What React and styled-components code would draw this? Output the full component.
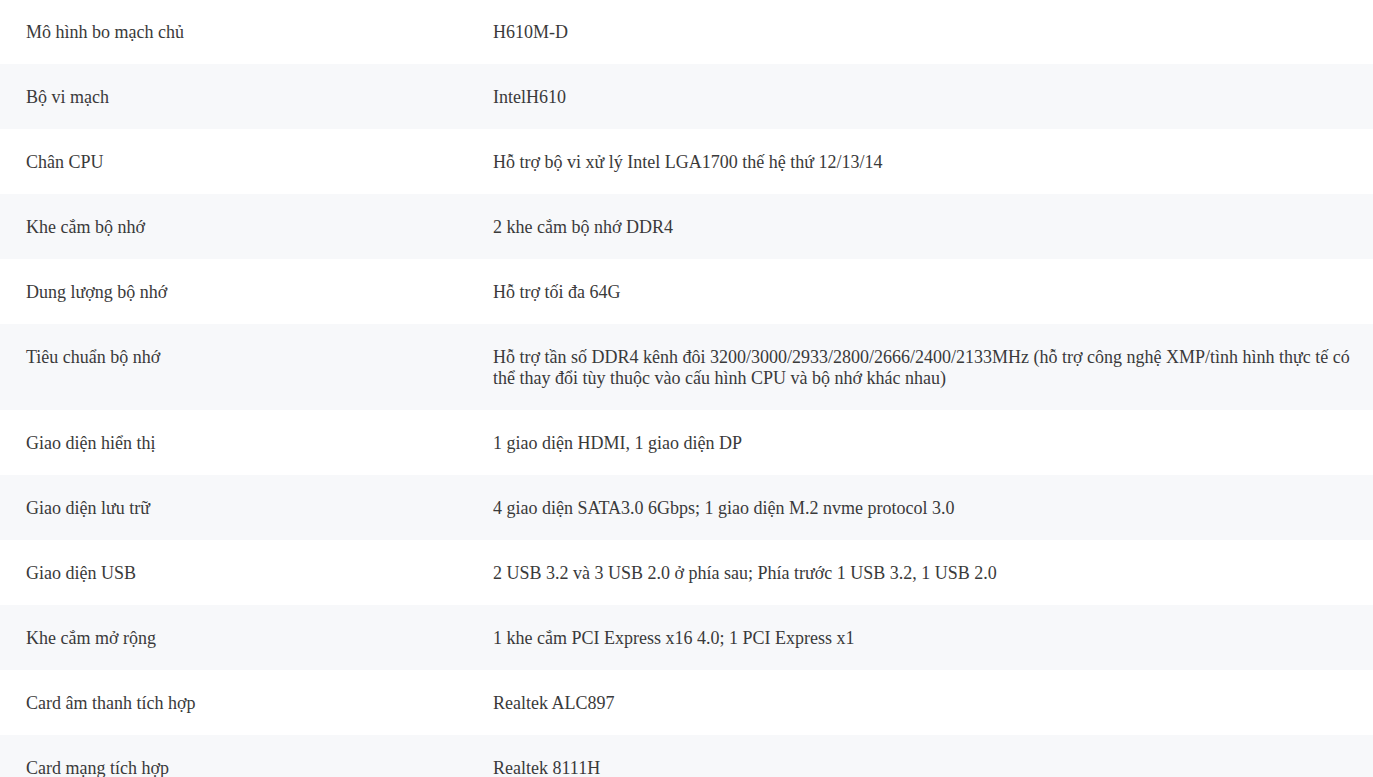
import styled, { createGlobalStyle } from "styled-components";

const specs = [
  ["Mô hình bo mạch chủ", "H610M-D"],
  ["Bộ vi mạch", "IntelH610"],
  ["Chân CPU", "Hỗ trợ bộ vi xử lý Intel LGA1700 thế hệ thứ 12/13/14"],
  ["Khe cắm bộ nhớ", "2 khe cắm bộ nhớ DDR4"],
  ["Dung lượng bộ nhớ", "Hỗ trợ tối đa 64G"],
  [
    "Tiêu chuẩn bộ nhớ",
    "Hỗ trợ tần số DDR4 kênh đôi 3200/3000/2933/2800/2666/2400/2133MHz (hỗ trợ công nghệ XMP/tình hình thực tế có thể thay đổi tùy thuộc vào cấu hình CPU và bộ nhớ khác nhau)",
  ],
  ["Giao diện hiển thị", "1 giao diện HDMI, 1 giao diện DP"],
  ["Giao diện lưu trữ", "4 giao diện SATA3.0 6Gbps; 1 giao diện M.2 nvme protocol 3.0"],
  ["Giao diện USB", "2 USB 3.2 và 3 USB 2.0 ở phía sau; Phía trước 1 USB 3.2, 1 USB 2.0"],
  ["Khe cắm mở rộng", "1 khe cắm PCI Express x16 4.0; 1 PCI Express x1"],
  ["Card âm thanh tích hợp", "Realtek ALC897"],
  ["Card mạng tích hợp", "Realtek 8111H"],
];

function App() {
  return (
    <>
      <GlobalStyle />
      <SpecTable>
        <tbody>
          {specs.map(([label, value], i) => (
            <Row key={label} $striped={i % 2 === 1}>
              <Label>{label}</Label>
              <Value>{value}</Value>
            </Row>
          ))}
        </tbody>
      </SpecTable>
    </>
  );
}

const SpecTable = styled.table`
  width: 100%;
  margin-top: -1px;
  border-collapse: collapse;
  table-layout: fixed;
`;

const Row = styled.tr`
  background-color: ${(p) => (p.$striped ? "#f7f8fa" : "#ffffff")};
`;

const Cell = styled.td`
  padding: 23px 20px 21px 26px;
  line-height: 21px;
  font-size: 18px;
  color: #3a3a3a;
  vertical-align: top;
`;

const Label = styled(Cell)`
  width: 467px;
`;

const Value = styled(Cell)``;

const GlobalStyle = createGlobalStyle`
  *, *::before, *::after {
    box-sizing: border-box;
  }

  body {
    margin: 0;
    font-family: "Liberation Serif", "Times New Roman", serif;
    background: #ffffff;
  }
`;

export default App;
